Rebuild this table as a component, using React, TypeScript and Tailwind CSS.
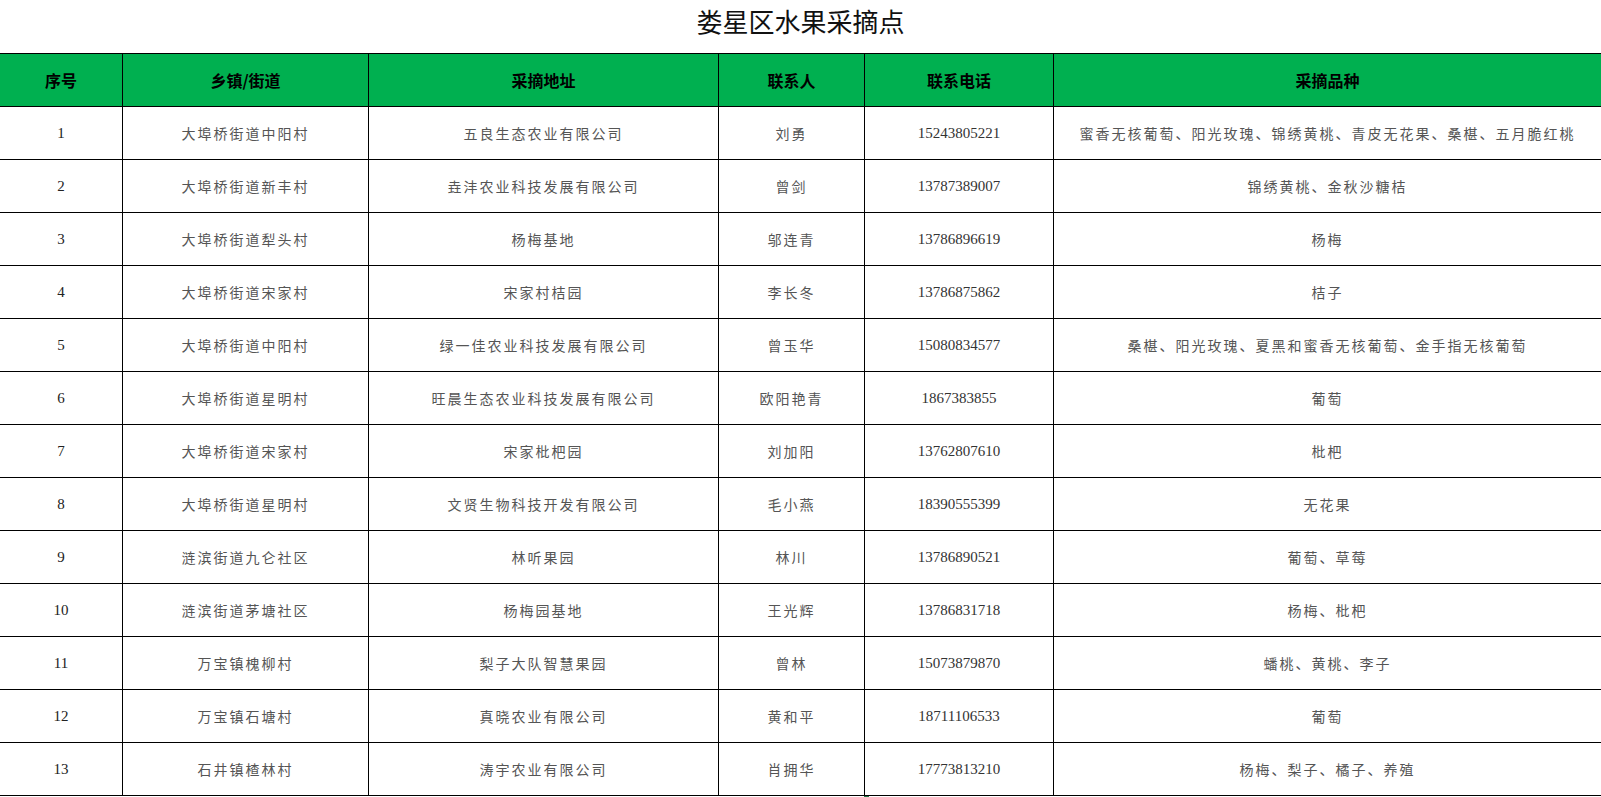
import React from "react";

interface Site {
  id: number;
  town: string;
  address: string;
  contact: string;
  phone: string;
  fruits: string;
}

const sites: Site[] = [
  { id: 1, town: "大埠桥街道中阳村", address: "五良生态农业有限公司", contact: "刘勇", phone: "15243805221", fruits: "蜜香无核葡萄、阳光玫瑰、锦绣黄桃、青皮无花果、桑椹、五月脆红桃" },
  { id: 2, town: "大埠桥街道新丰村", address: "垚沣农业科技发展有限公司", contact: "曾剑", phone: "13787389007", fruits: "锦绣黄桃、金秋沙糖桔" },
  { id: 3, town: "大埠桥街道犁头村", address: "杨梅基地", contact: "邬连青", phone: "13786896619", fruits: "杨梅" },
  { id: 4, town: "大埠桥街道宋家村", address: "宋家村桔园", contact: "李长冬", phone: "13786875862", fruits: "桔子" },
  { id: 5, town: "大埠桥街道中阳村", address: "绿一佳农业科技发展有限公司", contact: "曾玉华", phone: "15080834577", fruits: "桑椹、阳光玫瑰、夏黑和蜜香无核葡萄、金手指无核葡萄" },
  { id: 6, town: "大埠桥街道星明村", address: "旺晨生态农业科技发展有限公司", contact: "欧阳艳青", phone: "1867383855", fruits: "葡萄" },
  { id: 7, town: "大埠桥街道宋家村", address: "宋家枇杷园", contact: "刘加阳", phone: "13762807610", fruits: "枇杷" },
  { id: 8, town: "大埠桥街道星明村", address: "文贤生物科技开发有限公司", contact: "毛小燕", phone: "18390555399", fruits: "无花果" },
  { id: 9, town: "涟滨街道九仑社区", address: "林听果园", contact: "林川", phone: "13786890521", fruits: "葡萄、草莓" },
  { id: 10, town: "涟滨街道茅塘社区", address: "杨梅园基地", contact: "王光辉", phone: "13786831718", fruits: "杨梅、枇杷" },
  { id: 11, town: "万宝镇槐柳村", address: "梨子大队智慧果园", contact: "曾林", phone: "15073879870", fruits: "蟠桃、黄桃、李子" },
  { id: 12, town: "万宝镇石塘村", address: "真晓农业有限公司", contact: "黄和平", phone: "18711106533", fruits: "葡萄" },
  { id: 13, town: "石井镇楂林村", address: "涛宇农业有限公司", contact: "肖拥华", phone: "17773813210", fruits: "杨梅、梨子、橘子、养殖" },
];

const headers = ["序号", "乡镇/街道", "采摘地址", "联系人", "联系电话", "采摘品种"];

const cjk = "font-['Noto_Sans_CJK_SC',sans-serif]";
const num = "font-['Liberation_Serif','Noto_Sans_CJK_SC',serif]";

export default function App() {
  return (
    <div className="relative w-[1601px] h-[797px] overflow-hidden bg-white">
      {/* title */}
      <div className={`h-[53px] pt-[3px] text-center text-[26px] leading-[36px] text-[#111] ${cjk}`}>
        娄星区水果采摘点
      </div>

      <div className="grid grid-cols-[122px_246px_350px_146px_189px_548px]">
        {headers.map((h, i) => (
          <div
            key={h}
            className={`h-[54px] flex items-center justify-center bg-[#00b050] border-t border-b border-black text-[16px] font-bold text-black ${cjk} ${i > 0 ? "border-l" : ""}`}
          >
            {h}
          </div>
        ))}

        {sites.map((s) => (
          <React.Fragment key={s.id}>
            <div className={`h-[53px] flex items-center justify-center border-b border-black text-[15px] text-[#222] ${num}`}>
              {s.id}
            </div>
            <div className={`h-[53px] flex items-center justify-center border-b border-l border-black text-[14px] tracking-[2px] text-[#555] ${cjk}`}>
              {s.town}
            </div>
            <div className={`h-[53px] flex items-center justify-center border-b border-l border-black text-[14px] tracking-[2px] text-[#555] ${cjk}`}>
              {s.address}
            </div>
            <div className={`h-[53px] flex items-center justify-center border-b border-l border-black text-[14px] tracking-[2px] text-[#555] ${cjk}`}>
              {s.contact}
            </div>
            <div className={`h-[53px] flex items-center justify-center border-b border-l border-black text-[15px] text-[#333] ${num}`}>
              {s.phone}
            </div>
            <div className={`h-[53px] flex items-center justify-center border-b border-l border-black text-[14px] tracking-[2px] text-[#555] whitespace-nowrap ${cjk}`}>
              {s.fruits}
            </div>
          </React.Fragment>
        ))}
      </div>

      {/* selection fill handle */}
      <div className="absolute left-[864px] top-[796px] w-[5px] h-[2px] bg-[#217346]" />
    </div>
  );
}
